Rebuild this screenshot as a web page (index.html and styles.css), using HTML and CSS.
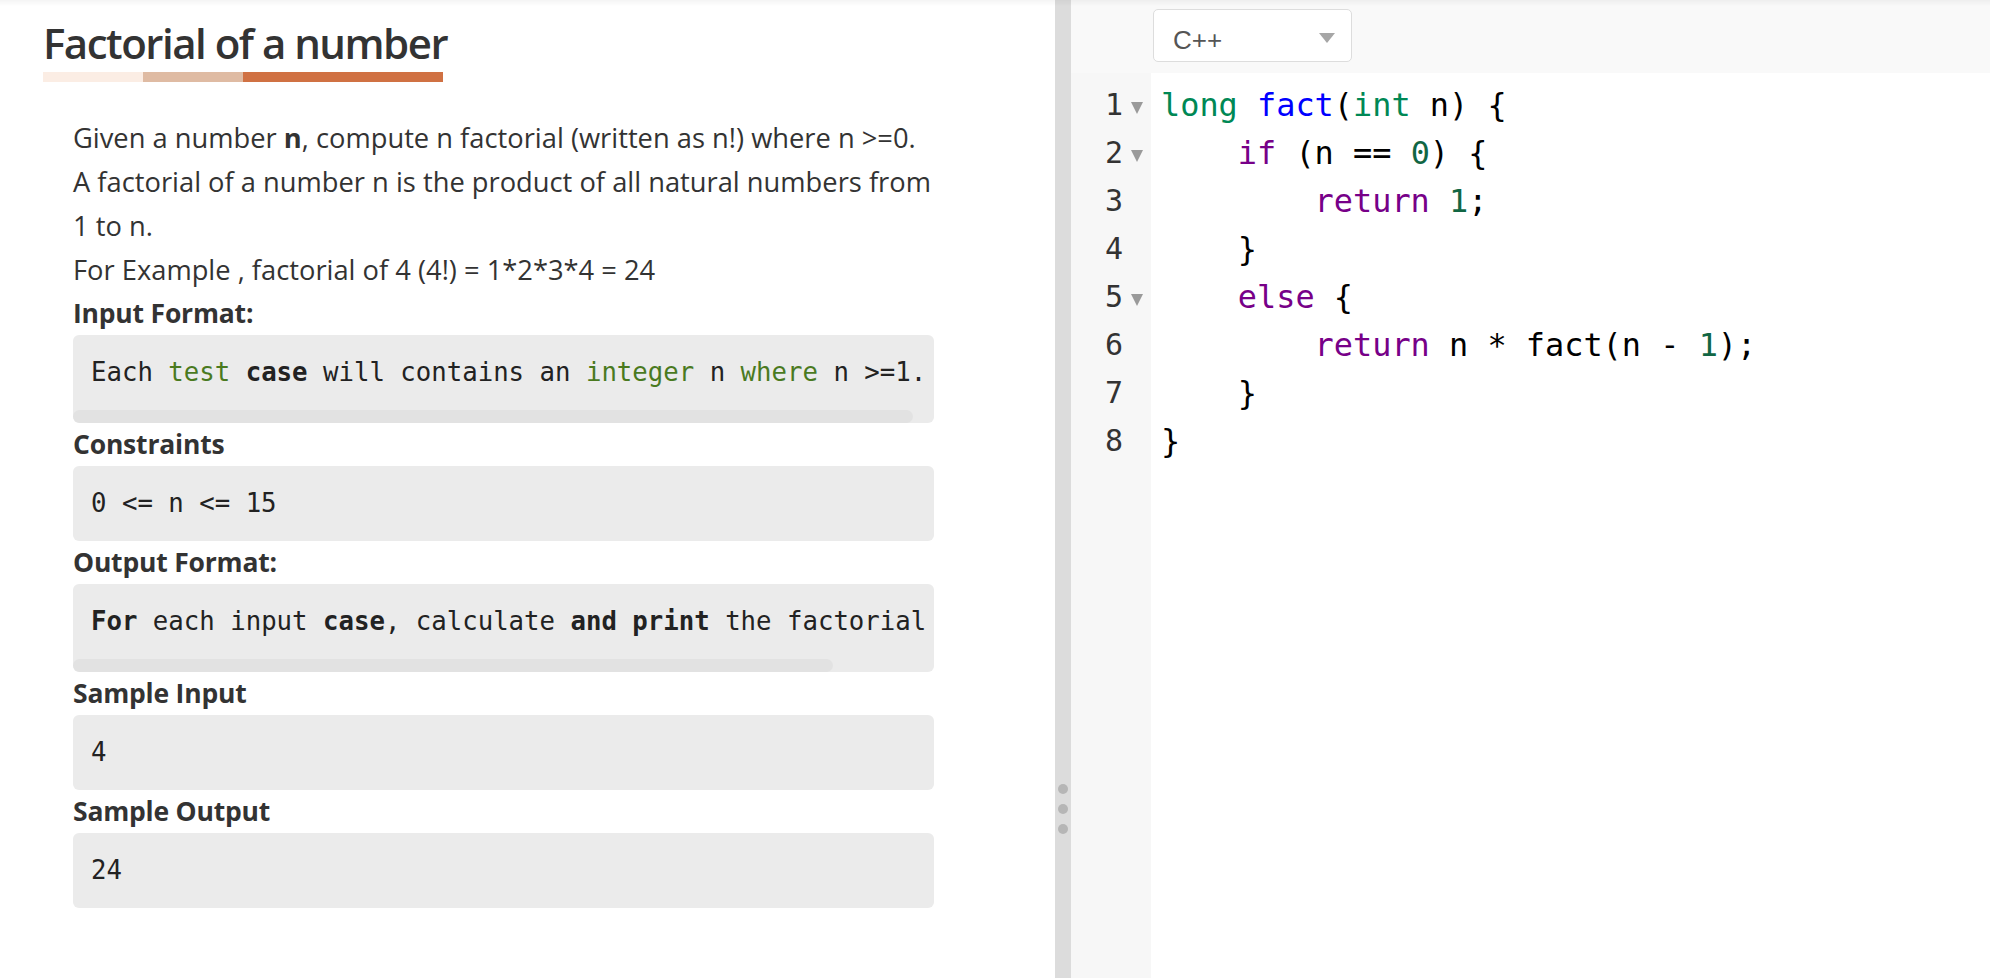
FILE: index.html
```html
<!DOCTYPE html>
<html lang="en">
<head>
<meta charset="utf-8">
<title>Factorial of a number</title>
<link rel="stylesheet" href="styles.css">
</head>
<body>
<div class="topshade"></div>
<div class="app">
  <section class="problem">
    <h1 class="title">Factorial of a number</h1>
    <div class="title-bar"><span class="seg seg-1"></span><span class="seg seg-2"></span><span class="seg seg-3"></span></div>
    <div class="desc">
      <p class="text">Given a number <b>n</b>, compute n factorial (written as n!) where n &gt;=0.<br>A factorial of a number n is the product of all natural numbers from 1 to n.<br>For Example , factorial of 4 (4!) = 1*2*3*4 = 24</p>
      <h3 class="label">Input Format:</h3>
      <div class="block">
        <pre class="block-code"><code>Each <span class="hl-g">test</span> <b>case</b> will contains an <span class="hl-g">integer</span> n <span class="hl-g">where</span> n &gt;=1.</code></pre>
        <div class="hscroll"><span class="thumb" style="width: 97.6%"></span></div>
      </div>
      <h3 class="label">Constraints</h3>
      <div class="block">
        <pre class="block-code"><code>0 &lt;= n &lt;= 15</code></pre>
      </div>
      <h3 class="label">Output Format:</h3>
      <div class="block">
        <pre class="block-code"><code><b>For</b> each input <b>case</b>, calculate <b>and</b> <b>print</b> the factorial of n.</code></pre>
        <div class="hscroll"><span class="thumb" style="width: 88.3%"></span></div>
      </div>
      <h3 class="label">Sample Input</h3>
      <div class="block">
        <pre class="block-code"><code>4</code></pre>
      </div>
      <h3 class="label">Sample Output</h3>
      <div class="block">
        <pre class="block-code"><code>24</code></pre>
      </div>
    </div>
  </section>
  <div class="splitter"><span class="dot"></span><span class="dot"></span><span class="dot"></span></div>
  <section class="editor">
    <div class="toolbar">
      <div class="select"><span class="select-text">C++</span><span class="caret"></span></div>
    </div>
    <div class="code">
      <div class="gutter">
        <div class="gl"><span class="ln">1</span><span class="fold"><span class="tri"></span></span></div>
        <div class="gl"><span class="ln">2</span><span class="fold"><span class="tri"></span></span></div>
        <div class="gl"><span class="ln">3</span><span class="fold"></span></div>
        <div class="gl"><span class="ln">4</span><span class="fold"></span></div>
        <div class="gl"><span class="ln">5</span><span class="fold"><span class="tri"></span></span></div>
        <div class="gl"><span class="ln">6</span><span class="fold"></span></div>
        <div class="gl"><span class="ln">7</span><span class="fold"></span></div>
        <div class="gl"><span class="ln">8</span><span class="fold"></span></div>
      </div>
      <pre class="lines"><div class="cl"><span class="t">long</span> <span class="d">fact</span>(<span class="t">int</span> n) {</div><div class="cl">    <span class="k">if</span> (n == <span class="n">0</span>) {</div><div class="cl">        <span class="k">return</span> <span class="n">1</span>;</div><div class="cl">    }</div><div class="cl">    <span class="k">else</span> {</div><div class="cl">        <span class="k">return</span> n * fact(n - <span class="n">1</span>);</div><div class="cl">    }</div><div class="cl">}</div></pre>
    </div>
  </section>
</div>
</body>
</html>
```

FILE: styles.css
```css
html, body {
  margin: 0;
  padding: 0;
  height: 100%;
  background: #ffffff;
}

body {
  font-family: "Open Sans", "Noto Sans", sans-serif;
  color: #333333;
  overflow: hidden;
}

.topshade {
  position: fixed;
  top: 0;
  left: 0;
  right: 0;
  height: 6px;
  background: linear-gradient(rgba(0, 0, 0, 0.045), rgba(0, 0, 0, 0));
  pointer-events: none;
  z-index: 5;
}

.app {
  display: flex;
  height: 978px;
}

/* ---------- problem panel ---------- */
.problem {
  width: 1055px;
  flex: none;
  padding-left: 43px;
  box-sizing: border-box;
}

.title {
  margin: 0;
  padding-top: 14px;
  font-size: 42px;
  font-weight: 600;
  line-height: 58px;
  color: #333333;
  letter-spacing: -1.5px;
}

.title-bar {
  display: flex;
  width: 400px;
  height: 10px;
}

.seg { display: block; height: 10px; }
.seg-1 { width: 100px; background: #fbede4; }
.seg-2 { width: 100px; background: #dfbba3; }
.seg-3 { width: 200px; background: #d07143; }

.desc {
  margin-left: 30px;
  width: 861px;
  padding-top: 34px;
}

.text {
  margin: 0;
  width: 872px;
  font-size: 27.3px;
  line-height: 44px;
  color: #333333;
}

.text b { font-weight: 700; }

.label {
  margin: 0;
  font-size: 26.5px;
  line-height: 43px;
  font-weight: 700;
  color: #333333;
  letter-spacing: -0.2px;
}

.block {
  background: #ebebeb;
  border-radius: 6px;
  overflow: hidden;
}

.block-code {
  margin: 0;
  padding: 18px 20px 18px 18px;
  overflow: hidden;
  white-space: pre;
  font-family: "DejaVu Sans Mono", monospace;
  font-size: 25.7px;
  line-height: 39px;
  color: #222222;
}

.block-code b { font-weight: 700; }
.hl-g { color: #4a7a1f; }

.hscroll {
  height: 13px;
  display: flex;
}

.thumb {
  display: block;
  height: 13px;
  background: #e2e2e2;
  border-radius: 7px;
}

/* ---------- splitter ---------- */
.splitter {
  width: 16px;
  flex: none;
  background: #dcdcdc;
  display: flex;
  flex-direction: column;
  align-items: center;
  gap: 10px;
  padding-top: 784px;
  box-sizing: border-box;
}

.dot {
  width: 10px;
  height: 10px;
  border-radius: 50%;
  background: #b6b6b6;
}

/* ---------- editor ---------- */
.editor {
  flex: 1;
  display: flex;
  flex-direction: column;
  min-width: 0;
}

.toolbar {
  height: 73px;
  flex: none;
  background: #f9f9f9;
  padding: 9px 0 0 82px;
  box-sizing: border-box;
}

.select {
  width: 199px;
  height: 53px;
  box-sizing: border-box;
  border: 1px solid #dddddd;
  border-radius: 5px;
  background: #ffffff;
  display: flex;
  justify-content: space-between;
  align-items: flex-start;
  padding: 15px 16px 0 19px;
}

.select-text {
  font-family: "Liberation Sans", Arial, sans-serif;
  font-size: 26px;
  line-height: 30px;
  color: #555555;
}

.caret {
  margin-top: 8px;
  width: 0;
  height: 0;
  border-left: 8.5px solid transparent;
  border-right: 8.5px solid transparent;
  border-top: 10px solid #a6a6a6;
}

.code {
  flex: 1;
  display: flex;
  background: #ffffff;
}

.gutter {
  width: 80px;
  flex: none;
  background: #f7f7f7;
  padding-top: 8px;
  box-sizing: border-box;
}

.gl {
  display: flex;
  height: 48px;
  font-family: "DejaVu Sans Mono", monospace;
  font-size: 30px;
  line-height: 48px;
}

.ln {
  width: 52px;
  text-align: right;
  color: #333333;
}

.fold {
  width: 28px;
  display: flex;
  justify-content: center;
  padding-top: 21px;
  box-sizing: border-box;
}

.tri {
  width: 0;
  height: 0;
  border-left: 6.5px solid transparent;
  border-right: 6.5px solid transparent;
  border-top: 12px solid #9a9a9a;
}

.lines {
  margin: 0;
  padding: 8px 0 0 10px;
  font-family: "DejaVu Sans Mono", monospace;
  font-size: 31.9px;
  line-height: 48px;
  color: #000000;
}

.cl { height: 48px; white-space: pre; }

.t { color: #008855; }
.d { color: #0000ff; }
.k { color: #770088; }
.n { color: #116644; }
```
